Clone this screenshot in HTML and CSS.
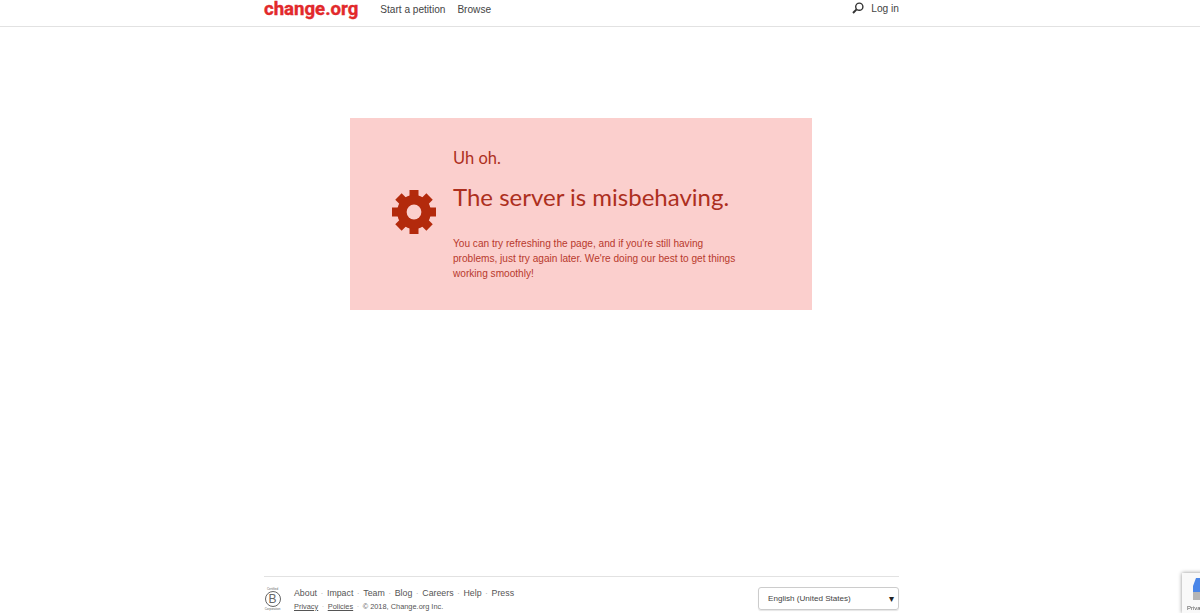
FILE: index.html
```html
<!DOCTYPE html>
<html lang="en">
<head>
    <meta charset="UTF-8">
    <meta name="viewport" content="width=device-width, initial-scale=1.0">
    <title>Change.org</title>
    <link rel="stylesheet" href="styles.css">
</head>
<body>
    <header class="header">
        <div class="wrap header-row">
            <a class="logo">change.org</a>
            <nav class="nav">
                <a>Start a petition</a>
                <a>Browse</a>
            </nav>
            <a class="login">
                <svg class="search-icon" width="12" height="12" viewBox="0 0 12 12">
                    <circle cx="7.3" cy="4.7" r="3.6" fill="none" stroke="#333" stroke-width="1.4"/>
                    <path d="M4.6 7.4L1 11" stroke="#333" stroke-width="2" fill="none"/>
                </svg>
                Log in
            </a>
        </div>
    </header>

    <main class="main">
        <div class="error-box">
            <svg class="gear" width="44" height="44" viewBox="-22 -22 44 44">
                <g fill="#b32a0c">
                    <rect x="-4.5" y="-22" width="9" height="44"/>
                    <rect x="-4.5" y="-22" width="9" height="44" transform="rotate(45)"/>
                    <rect x="-4.5" y="-22" width="9" height="44" transform="rotate(90)"/>
                    <rect x="-4.5" y="-22" width="9" height="44" transform="rotate(135)"/>
                </g>
                <circle r="12.2" fill="none" stroke="#b32a0c" stroke-width="9.5"/>
                <circle r="7.4" fill="#fbcfcd"/>
            </svg>
            <div class="error-text">
                <h3>Uh oh.</h3>
                <h1>The server is misbehaving.</h1>
                <p>You can try refreshing the page, and if you're still having problems, just try again later. We're doing our best to get things working smoothly!</p>
            </div>
        </div>
    </main>

    <footer class="wrap footer">
        <div class="bcorp">
            <span class="bcorp-small">Certified</span>
            <span class="bcorp-b">B</span>
            <span class="bcorp-small">Corporation</span>
        </div>
        <div class="footer-links">
            <ul class="links-main">
                <li>About</li>
                <li>Impact</li>
                <li>Team</li>
                <li>Blog</li>
                <li>Careers</li>
                <li>Help</li>
                <li>Press</li>
            </ul>
            <ul class="links-legal">
                <li><u>Privacy</u></li>
                <li><u>Policies</u></li>
                <li>© 2018, Change.org Inc.</li>
            </ul>
        </div>
        <div class="lang-select">
            <span>English (United States)</span>
            <span class="arrow">▾</span>
        </div>
    </footer>

    <div class="recaptcha">
        <svg class="recaptcha-icon" width="7" height="22" viewBox="0 0 7 22">
            <path d="M0 14V8L3 0H7V14Z" fill="#4a86e8"/>
            <rect y="14" width="7" height="8" fill="#b5b5b5"/>
        </svg>
        <span>Privacy</span>
    </div>
</body>
</html>
```

FILE: styles.css
```css
* {
  box-sizing: border-box;
}
html, body {
  height: 100%;
}
body {
  margin: 0;
  font-family: "Liberation Sans", Arial, sans-serif;
  color: #444;
  background-color: #fff;
  display: flex;
  flex-direction: column;
  overflow: hidden;
}
.wrap {
  width: 635px;
  margin-left: 264px;
}
.header {
  height: 27px;
  border-bottom: 1px solid #e2e2e2;
  flex-shrink: 0;
}
.header-row {
  display: flex;
  align-items: center;
  height: 18px;
}
.logo {
  font-family: Roboto, sans-serif;
  font-weight: 700;
  font-size: 18.6px;
  line-height: 18px;
  color: #e2292b;
  -webkit-text-stroke: 0.4px #e2292b;
}
.nav {
  display: flex;
  gap: 12px;
  margin-left: 22px;
  font-size: 10.1px;
  color: #444;
}
.login {
  margin-left: auto;
  display: flex;
  align-items: center;
  gap: 7px;
  font-size: 10.2px;
  position: relative;
  top: -1px;
}
.search-icon {
  display: block;
}
.main {
  flex: 1;
  padding-top: 91px;
}
.error-box {
  width: 462px;
  height: 192px;
  margin-left: 350px;
  background-color: #fbcfcd;
  display: flex;
  align-items: center;
  padding-left: 42px;
  color: #ad2f1e;
}
.gear {
  flex-shrink: 0;
  margin-top: -4px;
}
.error-text {
  align-self: flex-start;
  margin: 29px 0 0 17px;
  width: 290px;
  flex-shrink: 0;
}
h3 {
  margin: 0;
  font-family: Lato, sans-serif;
  font-weight: 400;
  font-size: 16.5px;
  line-height: 22px;
}
h1 {
  margin: 12px 0 0;
  font-family: Lato, sans-serif;
  font-weight: 400;
  font-size: 24px;
  line-height: 32px;
  white-space: nowrap;
}
p {
  margin: 23px 0 0;
  font-size: 10.1px;
  line-height: 15px;
  color: #b8392c;
}
.footer {
  height: 37px;
  flex-shrink: 0;
  border-top: 1px solid #e2e2e2;
  display: flex;
  padding-top: 10px;
}
.bcorp {
  width: 17px;
  display: flex;
  flex-direction: column;
  align-items: center;
  color: #666;
}
.bcorp-small {
  font-size: 3px;
  line-height: 4px;
  white-space: nowrap;
}
.bcorp-b {
  width: 16px;
  height: 16px;
  border: 1px solid #666;
  border-radius: 50%;
  font-size: 12px;
  line-height: 14px;
  text-align: center;
}
.footer-links {
  margin-left: 13px;
}
ul {
  list-style: none;
  margin: 0;
  padding: 0;
  display: flex;
}
li + li::before {
  content: "·";
  color: #bbb;
  margin: 0 3.5px;
}
.links-main {
  font-size: 8.8px;
  line-height: 13px;
  color: #555;
}
.links-legal {
  margin-top: 1px;
  font-size: 7.4px;
  line-height: 11px;
  color: #555;
}
.lang-select {
  margin-left: auto;
  width: 141px;
  height: 23px;
  border: 1px solid #ccc;
  border-radius: 3px;
  display: flex;
  align-items: center;
  justify-content: space-between;
  padding: 0 4px 0 9px;
  font-size: 8.1px;
  color: #444;
  box-shadow: 0 1px 1px rgba(0, 0, 0, 0.1);
}
.arrow {
  font-size: 10px;
  color: #222;
}
.recaptcha {
  position: fixed;
  left: 1182px;
  top: 573px;
  width: 30px;
  height: 40px;
  background-color: #f9f9f9;
  box-shadow: 0 0 4px rgba(0, 0, 0, 0.45);
  padding: 5px 0 0 5px;
  overflow: hidden;
}
.recaptcha-icon {
  display: block;
  margin-left: 6px;
}
.recaptcha span {
  display: block;
  font-size: 6px;
  line-height: 7px;
  color: #555;
  margin-top: 5px;
}
```
